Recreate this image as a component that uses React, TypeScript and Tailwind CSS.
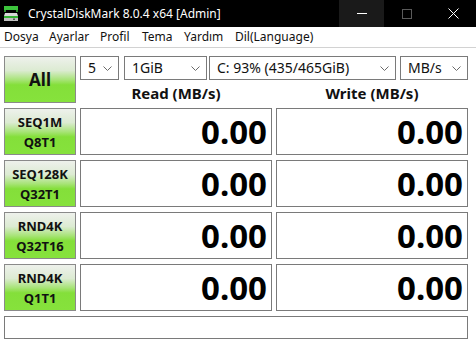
import React from "react";

const font = { fontFamily: '"Noto Sans", "Open Sans", sans-serif' };

function Chevron() {
  return (
    <svg width="9" height="5" viewBox="0 0 9 5" className="shrink-0">
      <path d="M0.5 0.5 L4.5 4.5 L8.5 0.5" fill="none" stroke="#6a6a6a" strokeWidth="1" />
    </svg>
  );
}

function Select({ label, w, ml }: { label: string; w: string; ml: string }) {
  return (
    <div className={`${w} ${ml} h-[24px] border border-[#7a7a7a] bg-white flex items-center justify-between pl-[7px] pr-[6px] text-[14px] text-[#111]`}>
      <span className="leading-none whitespace-nowrap">{label}</span>
      <Chevron />
    </div>
  );
}

const btnBg =
  "bg-[linear-gradient(to_bottom,#eef1ec_0%,#dcebd2_30%,#a9e47a_50%,#84df3a_62%,#86e23c_100%)]";

function TestButton({ l1, l2 }: { l1: string; l2: string }) {
  return (
    <div className={`w-[72px] h-[47px] border border-[#8a8a8a] ${btnBg} flex flex-col items-center justify-center text-[13px] font-bold text-[#111] leading-[20px]`}>
      <span>{l1}</span>
      <span>{l2}</span>
    </div>
  );
}

function Value({ w, ml }: { w: string; ml: string }) {
  return (
    <div className={`${w} ${ml} h-[47px] border border-[#7a7a7a] bg-white flex items-center justify-end pr-[4px]`}>
      <span className="text-[33px] font-bold text-black leading-none">0.00</span>
    </div>
  );
}

function Row({ l1, l2 }: { l1: string; l2: string }) {
  return (
    <div className="flex mt-[5px]">
      <TestButton l1={l1} l2={l2} />
      <Value w="w-[192px]" ml="ml-[4px]" />
      <Value w="w-[192px]" ml="ml-[4px]" />
    </div>
  );
}

export default function App() {
  return (
    <div className="w-[476px] h-[343px] bg-white overflow-hidden" style={font}>
      {/* Title bar */}
      <div className="h-[27px] bg-black flex items-center">
        <svg width="16" height="16" viewBox="0 0 16 16" className="ml-[3px]">
          <rect x="1" y="0" width="14" height="4" fill="#3cc43c" />
          <rect x="1" y="4" width="2" height="2" fill="#2a8a2a" />
          <rect x="13" y="4" width="2" height="2" fill="#2a8a2a" />
          <path d="M2 7 H14 L15 10 H1 Z" fill="#d8d8d8" />
          <rect x="1" y="10" width="14" height="5" fill="#bfbfbf" />
          <rect x="1" y="10" width="14" height="2" fill="#34b234" />
          <rect x="10" y="12.5" width="2" height="1.5" fill="#555" />
        </svg>
        <span className="ml-[9px] text-[12px] text-white leading-none whitespace-nowrap">
          CrystalDiskMark 8.0.4 x64 [Admin]
        </span>
        <div className="ml-auto flex h-full">
          <div className="w-[45px] h-full bg-[#1a1a1a] flex items-center justify-center">
            <div className="w-[10px] h-px bg-white" />
          </div>
          <div className="w-[46px] h-full flex items-center justify-center">
            <div className="w-[10px] h-[10px] border border-[#5a5a5a]" />
          </div>
          <div className="w-[46px] h-full flex items-center justify-center">
            <svg width="11" height="11" viewBox="0 0 11 11">
              <path d="M0.5 0.5 L10.5 10.5 M10.5 0.5 L0.5 10.5" stroke="#fff" strokeWidth="1" />
            </svg>
          </div>
        </div>
      </div>

      {/* Menu bar */}
      <div className="h-[21px] bg-white border-b border-[#d2d2d2] flex items-center pl-[4px] text-[12px] text-[#111] leading-none">
        <span className="w-[45px]">Dosya</span>
        <span className="w-[51px]">Ayarlar</span>
        <span className="w-[42px]">Profil</span>
        <span className="w-[42px]">Tema</span>
        <span className="w-[51px]">Yardım</span>
        <span>Dil(Language)</span>
      </div>

      {/* Content */}
      <div className="pl-[4px] pt-[8px]">
        <div className="flex">
          <div className={`w-[72px] h-[47px] border border-[#8a8a8a] ${btnBg} flex items-center justify-center text-[17px] font-bold text-[#111]`}>
            All
          </div>
          <div className="ml-[4px] w-[388px] flex flex-col">
            <div className="flex">
              <Select label="5" w="w-[39px]" ml="ml-[0px]" />
              <Select label="1GiB" w="w-[83px]" ml="ml-[5px]" />
              <Select label="C: 93% (435/465GiB)" w="w-[187px]" ml="ml-[2px]" />
              <Select label="MB/s" w="w-[68px]" ml="ml-[4px]" />
            </div>
            <div className="flex h-[23px] items-end">
              <div className="w-[192px] text-center text-[15px] font-bold text-[#111] leading-[20px]">Read (MB/s)</div>
              <div className="w-[192px] ml-[4px] text-center text-[15px] font-bold text-[#111] leading-[20px]">Write (MB/s)</div>
            </div>
          </div>
        </div>
        <Row l1="SEQ1M" l2="Q8T1" />
        <Row l1="SEQ128K" l2="Q32T1" />
        <Row l1="RND4K" l2="Q32T16" />
        <Row l1="RND4K" l2="Q1T1" />
        <div className="mt-[5px] w-[464px] h-[23px] border border-[#7a7a7a] bg-white" />
      </div>
    </div>
  );
}
